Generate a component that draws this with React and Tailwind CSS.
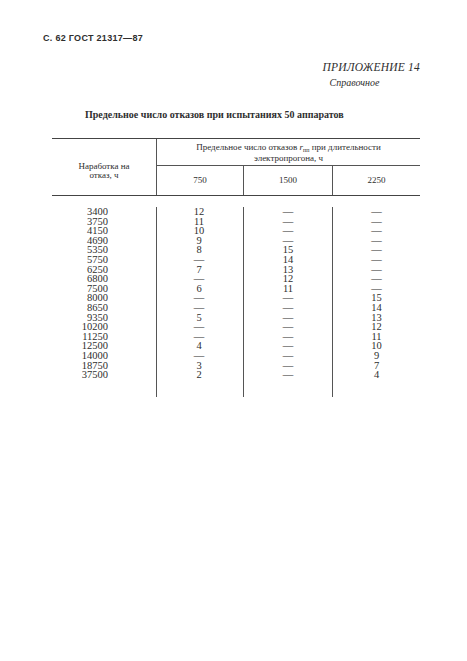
const rows = [
  ['3400', '12', '—', '—'],
  ['3750', '11', '—', '—'],
  ['4150', '10', '—', '—'],
  ['4690', '9', '—', '—'],
  ['5350', '8', '15', '—'],
  ['5750', '—', '14', '—'],
  ['6250', '7', '13', '—'],
  ['6800', '—', '12', '—'],
  ['7500', '6', '11', '—'],
  ['8000', '—', '—', '15'],
  ['8650', '—', '—', '14'],
  ['9350', '5', '—', '13'],
  ['10200', '—', '—', '12'],
  ['11250', '—', '—', '11'],
  ['12500', '4', '—', '10'],
  ['14000', '—', '—', '9'],
  ['18750', '3', '—', '7'],
  ['37500', '2', '—', '4'],
];

const serif = { fontFamily: '"Liberation Serif", "DejaVu Serif", serif' };

export default function App() {
  return (
    <div className="w-[467px] h-[661px] bg-white text-[#2e2e2e] overflow-hidden" style={serif}>
      <div className="pt-[32px] pl-[43px] text-[9px] leading-[12px] font-bold tracking-[0.3px] font-['Liberation_Sans',sans-serif]">
        С. 62 ГОСТ 21317—87
      </div>

      <div className="mt-[16px] flex justify-end pr-[47px]">
        <div className="flex flex-col items-start">
          <div className="italic text-[11.5px] leading-[14px] tracking-[0.2px]">ПРИЛОЖЕНИЕ 14</div>
          <div className="italic text-[10px] leading-[12px] mt-[3px] ml-[7px]">Справочное</div>
        </div>
      </div>

      <div className="mt-[20px] pl-[85px] text-[10px] leading-[12px] font-bold">
        Предельное число отказов при испытаниях 50 аппаратов
      </div>

      <div className="mt-[17px] ml-[52px] w-[368px]">
        <div className="grid grid-cols-[105px_263px] border-t-[1.5px] border-b-[1.5px] border-[#444]">
          <div className="border-r border-[#555] flex items-center justify-center text-center text-[9px] leading-[9px] pt-[7px]">
            <div>
              Наработка на
              <br />
              отказ, ч
            </div>
          </div>
          <div className="flex flex-col">
            <div className="h-[27px] border-b border-[#555] flex flex-col items-center justify-center text-[9px] leading-[11px] pt-[2px]">
              <div>
                Предельное число отказов <span className="italic">r</span>
                <sub className="text-[6px]">пп</sub> при длительности
              </div>
              <div>электропрогона, ч</div>
            </div>
            <div className="h-[29px] grid grid-cols-[87px_89px_87px] text-[9px]">
              <div className="border-r border-[#555] flex items-center justify-center">750</div>
              <div className="border-r border-[#555] flex items-center justify-center">1500</div>
              <div className="flex items-center justify-center">2250</div>
            </div>
          </div>
        </div>

        <div className="grid grid-cols-[105px_87px_89px_87px] h-[201px] pt-[11px] text-[10.5px] leading-[9.6px]">
          <div className="border-r border-[#555] flex flex-col items-end pr-[48px]">
            {rows.map((r) => (
              <div key={r[0]} className="h-[9.6px]">{r[0]}</div>
            ))}
          </div>
          <div className="border-r border-[#555] flex flex-col items-center pr-[2px]">
            {rows.map((r) => (
              <div key={r[0]} className="h-[9.6px]">{r[1]}</div>
            ))}
          </div>
          <div className="border-r border-[#555] flex flex-col items-center">
            {rows.map((r) => (
              <div key={r[0]} className="h-[9.6px]">{r[2]}</div>
            ))}
          </div>
          <div className="flex flex-col items-center">
            {rows.map((r) => (
              <div key={r[0]} className="h-[9.6px]">{r[3]}</div>
            ))}
          </div>
        </div>
      </div>
    </div>
  );
}
